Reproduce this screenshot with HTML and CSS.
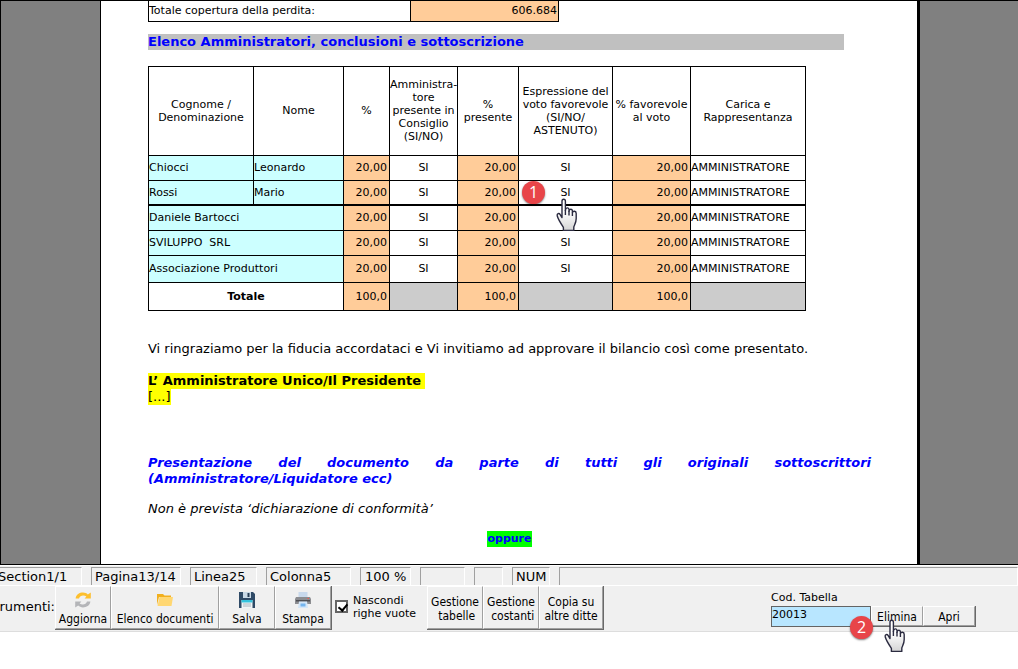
FILE: index.html
```html
<!DOCTYPE html>
<html lang="it">
<head>
<meta charset="utf-8">
<title>Elenco Amministratori</title>
<link rel="stylesheet" href="styles.css">
</head>
<body>
<svg class="defs" aria-hidden="true">
  <defs>
    <linearGradient id="hand-fill" x1="0" y1="0" x2="0" y2="1">
      <stop offset="0.4" stop-color="#ffffff"/>
      <stop offset="1" stop-color="#d4d4d4"/>
    </linearGradient>
    <symbol id="hand" viewBox="0 0 22 34">
      <path d="M6 3.2C6 .6 9.4 .6 9.4 3.2V12.5C9.6 9.2 12.8 9.2 13 11.4V13.2C13.4 10.6 16.2 10.9 16.4 12.8V14.6C17 12.6 20.2 12.8 20.2 15.4V20.5C20.2 24.6 18.6 26.6 17.8 29V32.4H7.4V29.4C5.4 26.4 2.2 21.6 1.2 17.8C.8 15.6 3 14.6 4.2 16.6L6 19.6Z" fill="url(#hand-fill)" stroke="#2b2b40" stroke-width="1.4" stroke-linejoin="round"/>
      <path d="M9.4 12V17M13 13V17.4M16.4 14.4V18" fill="none" stroke="#2b2b40" stroke-width="1.4"/>
    </symbol>
  </defs>
</svg>
<main class="viewer">
  <article class="sheet">
    <table class="loss">
      <tbody><tr><th scope="row">Totale copertura della perdita:</th><td>606.684</td></tr></tbody>
    </table>
    <h2 class="band">Elenco Amministratori, conclusioni e sottoscrizione</h2>
    <table class="admins">
      <colgroup><col class="c-surname"><col class="c-name"><col class="c-pct"><col class="c-board"><col class="c-present"><col class="c-vote"><col class="c-favor"><col class="c-role"></colgroup>
      <thead>
        <tr>
          <th>Cognome /<br>Denominazione</th><th>Nome</th><th>%</th>
          <th>Amministra-<br>tore<br>presente in<br>Consiglio<br>(SI/NO)</th>
          <th>%<br>presente</th>
          <th>Espressione del<br>voto favorevole<br>(SI/NO/<br>ASTENUTO)</th>
          <th>% favorevole<br>al voto</th><th>Carica e<br>Rappresentanza</th>
        </tr>
      </thead>
      <tbody>
        <tr><td class="who">Chiocci</td><td class="who">Leonardo</td><td class="num">20,00</td><td>SI</td><td class="num">20,00</td><td>SI</td><td class="num">20,00</td><td class="role">AMMINISTRATORE</td></tr>
        <tr><td class="who">Rossi</td><td class="who">Mario</td><td class="num">20,00</td><td>SI</td><td class="num">20,00</td><td class="target">SI<span class="badge badge-vote">1</span><svg class="hand hand-vote" aria-hidden="true"><use href="#hand"/></svg></td><td class="num">20,00</td><td class="role">AMMINISTRATORE</td></tr>
        <tr class="firm-start"><td class="who" colspan="2">Daniele Bartocci</td><td class="num">20,00</td><td>SI</td><td class="num">20,00</td><td></td><td class="num">20,00</td><td class="role">AMMINISTRATORE</td></tr>
        <tr><td class="who" colspan="2">SVILUPPO&nbsp; SRL</td><td class="num">20,00</td><td>SI</td><td class="num">20,00</td><td>SI</td><td class="num">20,00</td><td class="role">AMMINISTRATORE</td></tr>
        <tr class="tall"><td class="who" colspan="2">Associazione Produttori</td><td class="num">20,00</td><td>SI</td><td class="num">20,00</td><td>SI</td><td class="num">20,00</td><td class="role">AMMINISTRATORE</td></tr>
      </tbody>
      <tfoot>
        <tr><th colspan="2" scope="row">Totale</th><td class="num">100,0</td><td class="off"></td><td class="num">100,0</td><td class="off"></td><td class="num">100,0</td><td class="off"></td></tr>
      </tfoot>
    </table>
    <p class="thanks">Vi ringraziamo per la fiducia accordataci e Vi invitiamo ad approvare il bilancio così come presentato.</p>
    <p class="signer"><mark><strong>L’ Amministratore Unico/Il Presidente&nbsp;</strong></mark><br><mark>[...]</mark></p>
    <h3 class="filing">Presentazione del documento da parte di tutti gli originali sottoscrittori (Amministratore/Liquidatore ecc)</h3>
    <p class="note">Non è prevista ‘dichiarazione di conformità’</p>
    <p class="or"><mark>oppure</mark></p>
  </article>
</main>
<footer class="chrome">
  <div class="status">
    <span class="cell cell-section">Section1/1</span><span class="cell cell-page">Pagina13/14</span><span class="cell cell-line">Linea25</span><span class="cell cell-column">Colonna5</span><span class="cell cell-zoom">100 %</span><span class="cell cell-blank"></span><span class="cell cell-small"></span><span class="cell cell-num">NUM</span><span class="cell cell-rest"></span>
  </div>
  <div class="toolbar">
    <span class="caption">Strumenti:</span>
    <div class="group">
      <button class="tool" type="button">
        <svg viewBox="0 0 16 16" aria-hidden="true"><path d="M.6 6.500C1.200 2.400 4.500.6 8 .6c2 0 3.600.7 4.800 1.800L15.800.6V6.500H9.600l1.800-2C9 2.800 4.800 3.200 4 6.500Z" fill="#fdbf2d"/><path d="M15.400 9.500C14.800 13.600 11.500 15.400 8 15.400c-2 0-3.600-.7-4.800-1.800L.2 15.400V9.500H6.400l-1.800 2C7 13.200 11.200 12.800 12 9.500Z" fill="#b4b5b8"/></svg>
        Aggiorna</button>
      <button class="tool tool-list" type="button">
        <svg viewBox="0 0 16 16" aria-hidden="true"><path d="M0 2H6L7.500 3.500H14V5H2L0 13Z" fill="#f2b01e"/><path d="M2.500 5H16L14.500 14H.5Z" fill="#ffd772"/></svg>
        Elenco documenti</button>
      <button class="tool" type="button">
        <svg viewBox="0 0 16 16" aria-hidden="true"><path d="M0 0H14L16 2V16H0Z" fill="#2f4a66"/><path d="M4 0H12V6H4Z" fill="#c9d9e6"/><path d="M8.500 1H10.500V5H8.500Z" fill="#263c55"/><path d="M2.500 8H13.500V16H2.500Z" fill="#f1f5f7"/><path d="M2.500 8H13.500V10.500H2.500Z" fill="#35c3dd"/><path d="M4 12H12M4 14H12" stroke="#a8b4bd"/></svg>
        Salva</button>
      <button class="tool" type="button">
        <svg viewBox="0 0 16 16" aria-hidden="true"><path d="M3.500 0H12.500V5H3.500Z" fill="#c8d9ec"/><path d="M1 5H15L16 7V12H0V7Z" fill="#8c8d91"/><path d="M1 8H15V9.500H1Z" fill="#4e4f54"/><path d="M12.500 6H14V7H12.500Z" fill="#f15b50"/><path d="M4 9.500H12L13 16H3Z" fill="#d3e6f8"/><path d="M5.500 11.500H10.500V14.500H5.500Z" fill="#75b5ee"/></svg>
        Stampa</button>
    </div>
    <label class="hide-rows"><input type="checkbox" checked><span>Nascondi<br>righe vuote</span></label>
    <div class="group">
      <button class="tool" type="button">Gestione<br>&nbsp;tabelle</button>
      <button class="tool" type="button">Gestione<br>&nbsp;costanti</button>
      <button class="tool tool-copy" type="button">Copia su<br>altre ditte</button>
    </div>
    <div class="lookup">
      <label for="code">Cod. Tabella</label>
      <div class="lookup-row">
        <input id="code" type="text" value="20013">
        <div class="group actions">
          <button class="tool" type="button">Elimina</button>
          <button class="tool" type="button">Apri</button>
        </div>
        <span class="badge badge-delete">2</span>
        <svg class="hand hand-delete" aria-hidden="true"><use href="#hand"/></svg>
      </div>
    </div>
  </div>
</footer>
</body>
</html>
```
FILE: styles.css
```css
* { box-sizing: border-box; }
body {
  min-height: 100vh;
  margin: 0;
  background: #fff;
  color: #000;
  font-family: "DejaVu Sans", Verdana, sans-serif;
  font-size: 13px;
  line-height: 16px;
}
h2, h3, p { margin: 0; font-size: 13px; }
.defs { position: absolute; width: 0; height: 0; }

/* document area */
.viewer {
  display: grid;
  grid-template-columns: 99fr minmax(auto, 820px) 98fr;
  background: #808080;
  border: 1px solid #000;
  border-right: 0;
}
.sheet {
  grid-column: 2;
  padding: 0 46px 17px 47px;
  background: #fff;
  border-left: 1px solid #000;
  border-right: 3px solid #000;
}
table { border-collapse: collapse; table-layout: fixed; font-size: 11px; line-height: 13px; }
th, td { border: 1px solid #000; padding: 0; font-weight: normal; }
.loss { width: 411px; }
.loss tr { height: 20px; }
.loss th { width: 262px; text-align: left; border-top: 0; }
.loss td { text-align: right; padding-right: 1px; background: #fc9; border-top: 0; }

.band { margin: 12px 27px 16px 0; background: #c0c0c0; color: #00f; }

.admins { width: 658px; }
.admins td { text-align: center; }
.c-surname { width: 105px; }
.c-name { width: 90px; }
.c-pct { width: 46px; }
.c-board { width: 68px; }
.c-present { width: 61px; }
.c-vote { width: 94px; }
.c-favor { width: 78px; }
.c-role { width: 115px; }
.admins thead tr { height: 89px; }
.admins tbody tr { height: 25px; }
.admins tbody .tall { height: 27px; }
.admins tfoot tr { height: 28px; }
.admins tfoot th { font-weight: bold; }
.admins .firm-start td { border-top: 2px solid #000; }
.admins th { white-space: nowrap; }
.admins .who { text-align: left; background: #cff; }
.admins .num { text-align: right; padding-right: 2px; background: #fc9; }
.admins .role { text-align: left; }
.admins .off { background: #ccc; }
.target { position: relative; }

.thanks { margin-top: 30px; }
.signer { margin-top: 16px; }
mark { display: inline-block; background: #ff0; color: inherit; }
.signer, .or { line-height: 16px; }
.filing { margin-top: 50px; color: #00f; font-style: italic; text-align: justify; }
.note { margin-top: 14px; font-style: italic; }
.or { margin-top: 14px; text-align: center; font-size: 11px; font-weight: bold; color: #00f; }
.or mark { background: #0f0; }

/* numbered callouts and pointers */
.badge {
  position: absolute;
  display: flex;
  align-items: center;
  justify-content: center;
  width: 23px;
  height: 23px;
  border-radius: 50%;
  background: #e84549;
  box-shadow: 0 1px 2px rgba(0, 0, 0, .5);
  color: #fff;
  font: 16px/23px "Open Sans", sans-serif;
}
.badge-vote { left: 3px; top: 0; }
.badge-delete { left: 79px; top: 10px; }
.hand { position: absolute; width: 22px; height: 34px; pointer-events: none; }
.hand-vote { left: 37px; top: 17px; }
.hand-delete { left: 113px; top: 13px; }

/* status bar and toolbar */
.chrome { background: #f0f0f0; border-bottom: 1px solid #ddd; }
.status {
  display: flex;
  gap: 9px;
  height: 21px;
  padding-top: 1px;
  margin-left: -6px;
  border-top: 1px solid #fff;
  border-bottom: 1px solid #fff;
}
.cell {
  flex: none;
  padding-left: 3px;
  border: 1px solid #a0a0a0;
  border-right-color: #fff;
  border-bottom: 0;
  line-height: 18px;
  white-space: nowrap;
}
.cell-section { width: 88px; }
.cell-page { width: 90px; }
.cell-line { width: 67px; }
.cell-column { width: 85px; }
.cell-zoom { width: 51px; padding-left: 4px; }
.cell-blank { width: 45px; }
.cell-small { width: 29px; }
.cell-num { width: 38px; }
.cell-rest { flex: 1; }

.toolbar { display: flex; align-items: flex-start; height: 45px; }
.caption {
  display: flex;
  flex: none;
  justify-content: flex-end;
  width: 55px;
  padding-top: 13px;
}
.group {
  display: flex;
  flex: none;
  height: 44px;
  border-right: 1px solid #696969;
  border-bottom: 1px solid #696969;
}
.tool {
  width: 56px;
  padding: 3px 0 0;
  border: 1px solid #fff;
  border-right-color: #a0a0a0;
  border-bottom-color: #a0a0a0;
  background: #f0f0f0;
  color: #000;
  font: 12px/14px "DejaVu Sans Condensed", "DejaVu Sans", Tahoma, sans-serif;
  white-space: nowrap;
}
.tool svg { display: block; width: 16px; height: 16px; margin: 0 auto 4px; }
.tool-list { width: 108px; }
.tool-copy { width: 64px; }
.hide-rows {
  display: flex;
  flex: none;
  align-items: center;
  gap: 5px;
  width: 95px;
  padding: 8px 0 0 3px;
  font-size: 11px;
  line-height: 13px;
  white-space: nowrap;
}
.hide-rows input {
  appearance: none;
  flex: none;
  width: 13px;
  height: 13px;
  margin: 0;
  border: 2px solid #646464;
  background: #fff;
  position: relative;
}
.hide-rows input:checked::after {
  content: "";
  position: absolute;
  left: 3px;
  top: 0;
  width: 4px;
  height: 7px;
  border: solid #000;
  border-width: 0 2px 2px 0;
  transform: rotate(40deg);
}
.lookup { margin-left: auto; padding: 5px 42px 0 0; font-size: 11px; }
.lookup label { display: block; line-height: 13px; margin-bottom: 2px; }
.lookup-row { position: relative; display: flex; }
.lookup-row input {
  width: 100px;
  height: 21px;
  padding: 0 0 4px;
  border: 1px solid #646464;
  background: #b8e6ff;
  color: #000;
  font: 11px "DejaVu Sans", Verdana, sans-serif;
}
.actions { height: 21px; }
.actions .tool { width: 52px; }
```
